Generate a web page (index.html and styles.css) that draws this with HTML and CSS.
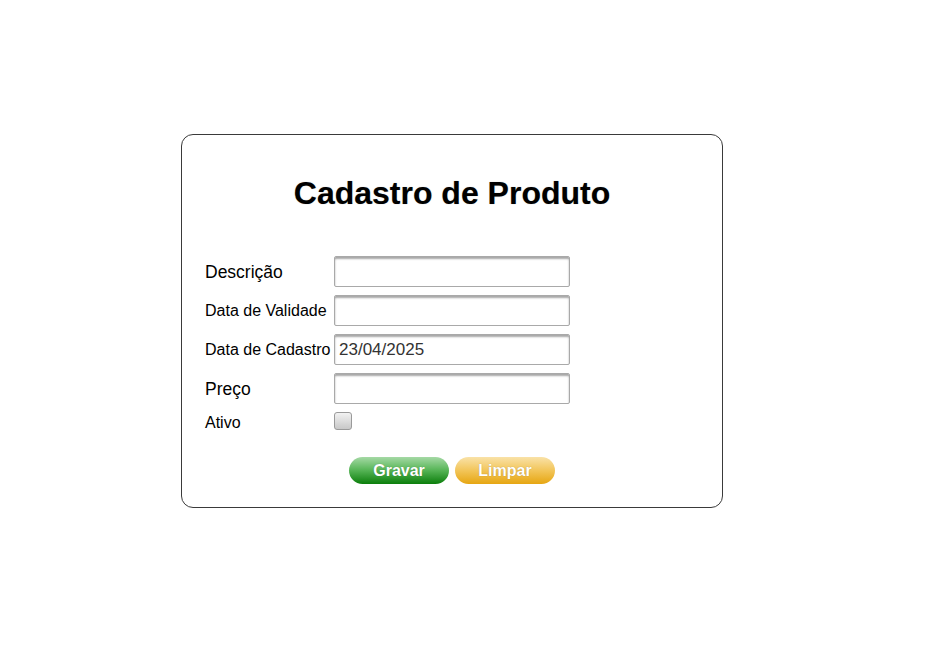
FILE: index.html
```html
<!DOCTYPE html>
<html lang="pt">
<head>
<meta charset="utf-8">
<title>Cadastro de Produto</title>
<link rel="stylesheet" href="styles.css">
</head>
<body>
<div class="page">
  <form class="card">
    <h1 class="title">Cadastro de Produto</h1>
    <div class="fields">
      <label class="lbl lbl-lg" for="desc">Descrição</label>
      <input class="field" id="desc" type="text">
      <label class="lbl" for="val">Data de Validade</label>
      <input class="field" id="val" type="text">
      <label class="lbl" for="cad">Data de Cadastro</label>
      <input class="field" id="cad" type="text" value="23/04/2025">
      <label class="lbl lbl-lg" for="preco">Preço</label>
      <input class="field" id="preco" type="text">
      <label class="lbl lbl-last" for="ativo">Ativo</label>
      <div class="check-cell"><input class="check" id="ativo" type="checkbox"></div>
    </div>
    <div class="actions">
      <button type="button" class="btn btn-green">Gravar</button>
      <button type="button" class="btn btn-orange">Limpar</button>
    </div>
  </form>
</div>
</body>
</html>
```

FILE: styles.css
```css
html, body {
  margin: 0;
  padding: 0;
  background: #ffffff;
  font-family: "Liberation Sans", Arial, sans-serif;
  color: #000;
}

.page {
  padding: 134px 0 0 181px;
}

.card {
  box-sizing: border-box;
  width: 542px;
  height: 374px;
  border: 1px solid #3a3a3a;
  border-radius: 12px;
  padding: 0 0 0 23px;
  display: flex;
  flex-direction: column;
}

.title {
  margin: 40px 0 0 -23px;
  font-size: 32px;
  line-height: 37px;
  font-weight: bold;
  text-align: center;
  text-shadow: 0 0 1px rgba(0,0,0,0.35);
}

.fields {
  margin-top: 44px;
  display: grid;
  grid-template-columns: 129px 236px;
  grid-template-rows: 31px 31px 31px 31px 20px;
  row-gap: 8px;
  align-items: center;
}

.lbl {
  font-size: 16px;
  line-height: 18px;
  white-space: nowrap;
}

.lbl-lg {
  font-size: 17.5px;
}

.lbl-last {
  align-self: start;
  padding-top: 2px;
}

.field {
  box-sizing: border-box;
  width: 236px;
  height: 31px;
  margin: 0;
  padding: 0 4px;
  border: 1px solid #a9a9a9;
  border-radius: 2px;
  box-shadow: inset 0 2px 2px rgba(0,0,0,0.35);
  font-family: "Liberation Sans", Arial, sans-serif;
  font-size: 17px;
  color: #333;
  background: #fff;
}

.check-cell {
  display: flex;
  align-items: flex-start;
  align-self: start;
  height: 20px;
}

.check {
  appearance: none;
  -webkit-appearance: none;
  margin: 0;
  width: 18px;
  height: 18px;
  border: 1px solid #9a9a9a;
  border-radius: 3px;
  background: linear-gradient(#f2f2f2, #c8c8c8);
}

.actions {
  margin: 25px 0 0 -23px;
  display: flex;
  justify-content: center;
  gap: 6px;
}

.btn {
  width: 100px;
  height: 27px;
  border: none;
  border-radius: 14px;
  padding: 0;
  font-family: "Liberation Sans", Arial, sans-serif;
  font-size: 16px;
  font-weight: bold;
  color: #fff;
  text-shadow: 0 0 1px rgba(0,0,0,0.3);
  cursor: pointer;
}

.btn-green {
  background: linear-gradient(#a5d9a5, #5cb85c 45%, #0b7e0b);
}

.btn-orange {
  background: linear-gradient(#f9e2a8, #f2c559 50%, #e6a612);
}
```
